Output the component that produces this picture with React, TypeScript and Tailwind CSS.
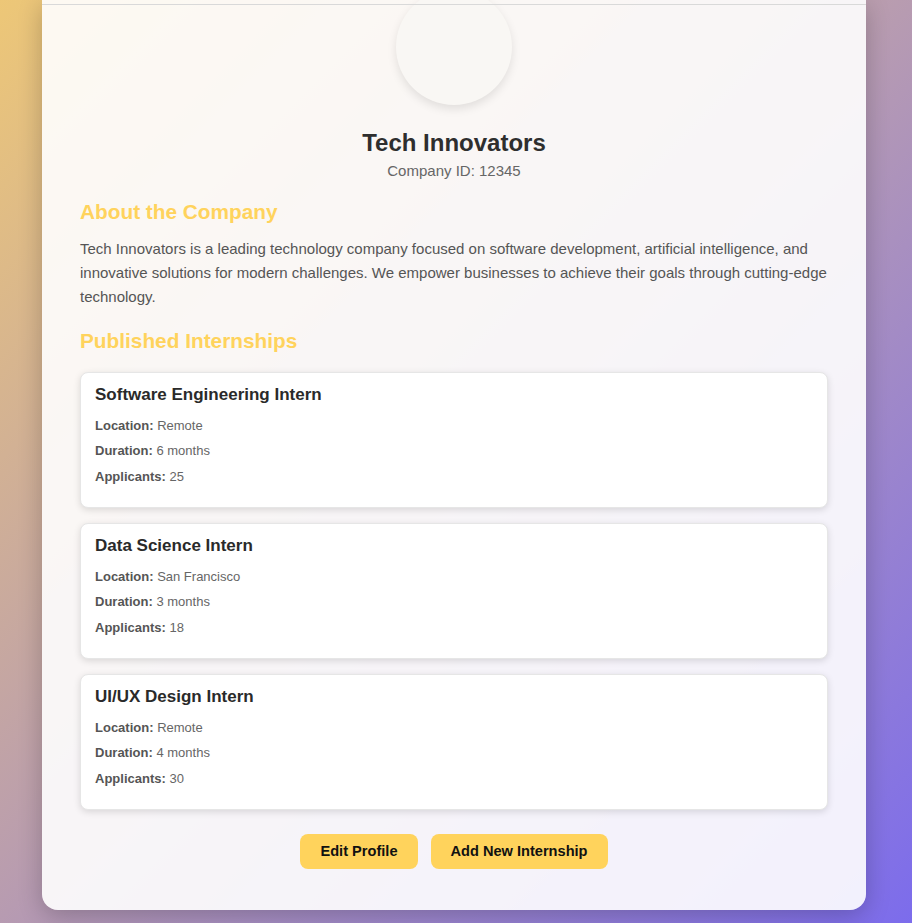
const internships = [
  { title: "Software Engineering Intern", location: "Remote", duration: "6 months", applicants: 25 },
  { title: "Data Science Intern", location: "San Francisco", duration: "3 months", applicants: 18 },
  { title: "UI/UX Design Intern", location: "Remote", duration: "4 months", applicants: 30 },
];

const InternshipCard = ({ item }: { item: (typeof internships)[number] }) => {
  return (
    <div className="bg-white border border-[#e6e6e6] rounded-lg shadow-[0_2px_7px_rgba(0,0,0,0.13)] pl-[14px] pr-4 pt-[12px] pb-[20px]">
      <h3 className="text-[17px] leading-[20px] font-bold text-[#2a2a2a]">{item.title}</h3>
      <div className="mt-[11px] flex flex-col gap-[5.5px] text-[13px] leading-[20px] text-[#666]">
        <p>
          <span className="font-bold text-[#555]">Location:</span> {item.location}
        </p>
        <p>
          <span className="font-bold text-[#555]">Duration:</span> {item.duration}
        </p>
        <p>
          <span className="font-bold text-[#555]">Applicants:</span> {item.applicants}
        </p>
      </div>
    </div>
  );
};

export default function App() {
  return (
    <div
      className="min-h-[923px] w-full bg-[linear-gradient(135deg,#edc777_0%,#b79bb1_50%,#7c6cec_100%)] pb-[13px]"
      style={{ fontFamily: '"Liberation Sans", Arial, sans-serif' }}
    >
      <div className="relative ml-[42px] w-[824px] overflow-hidden rounded-b-2xl bg-white/90 shadow-[0_6px_24px_rgba(0,0,0,0.22)] px-[38px] pb-[41px]">
        {/* line at the top of the visible area */}
        <div className="absolute left-0 right-0 top-[4px] h-px bg-[#d9d9d9]" />

        <div className="flex flex-col items-center">
          <div className="-mt-[11px] h-[116px] w-[116px] rounded-full bg-[#f9f7f4] shadow-[0_4px_10px_rgba(0,0,0,0.1)]" />
          <h1 className="mt-[24px] text-[24px] leading-[28px] font-bold text-[#2e2e2e]">Tech Innovators</h1>
          <p className="mt-[5px] text-[15px] leading-[18px] text-[#666]">Company ID: 12345</p>
        </div>

        <h2 className="mt-[19.5px] text-[20.8px] leading-[23px] font-bold text-[#ffd35c]">About the Company</h2>
        <p className="mt-[14.5px] text-[15px] leading-[24px] text-[#555]">
          Tech Innovators is a leading technology company focused on software development, artificial intelligence, and
          innovative solutions for modern challenges. We empower businesses to achieve their goals through cutting-edge
          technology.
        </p>

        <h2 className="mt-[19.5px] text-[20.8px] leading-[23px] font-bold text-[#ffd35c]">Published Internships</h2>
        <div className="mt-[20px] flex flex-col gap-[15px]">
          {internships.map((item) => (
            <InternshipCard key={item.title} item={item} />
          ))}
        </div>

        <div className="mt-[24px] flex justify-center gap-[13px]">
          <button className="rounded-lg bg-[#ffd35c] px-5 py-[9px] text-[14.6px] leading-[17px] font-bold text-[#111]">
            Edit Profile
          </button>
          <button className="rounded-lg bg-[#ffd35c] px-5 py-[9px] text-[14.6px] leading-[17px] font-bold text-[#111]">
            Add New Internship
          </button>
        </div>
      </div>
    </div>
  );
}
